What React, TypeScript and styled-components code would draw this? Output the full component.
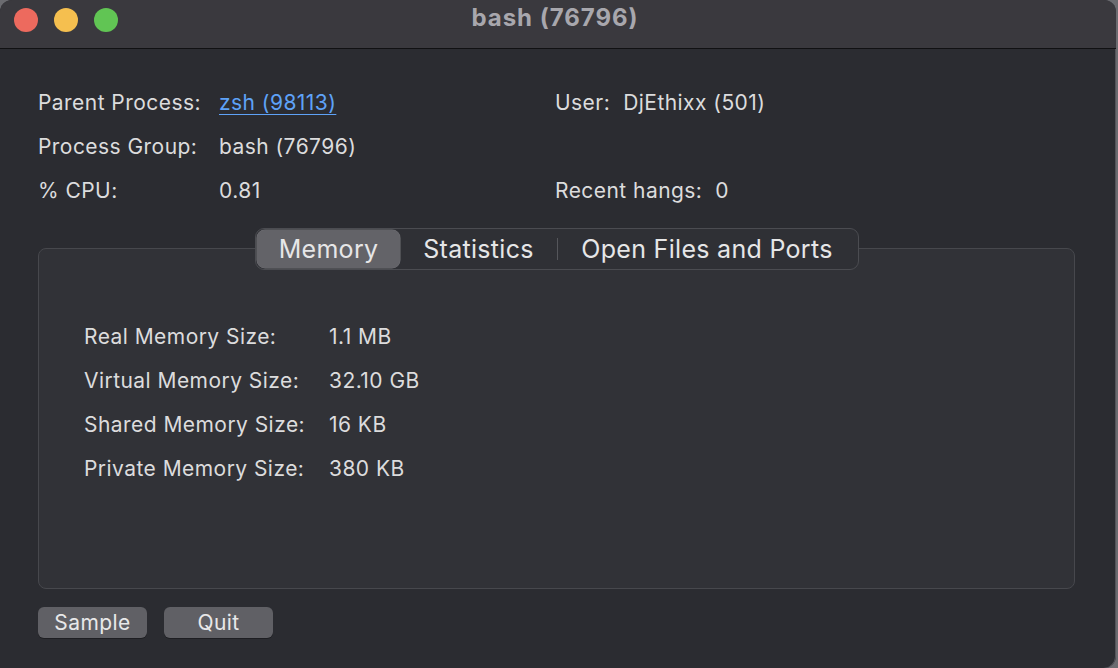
import React from "react";
import styled, { createGlobalStyle } from "styled-components";

const Global = createGlobalStyle`
  html, body { margin: 0; padding: 0; background: #2b2c30; }
  body { font-family: Inter, "Noto Sans", "Liberation Sans", sans-serif; -webkit-font-smoothing: antialiased; }
  #root { width: 1118px; height: 668px; overflow: hidden; background: #6b6b70; }
`;

const Window = styled.div`
  width: 1116px;
  height: 668px;
  background: #2b2c31;
  border-top-right-radius: 12px;
  border-bottom-right-radius: 12px;
  border-top-left-radius: 12px;
  box-shadow: inset -1px 0 0 #55555a;
  display: flex;
  flex-direction: column;
  overflow: hidden;
`;

const TitleBar = styled.div`
  height: 48px;
  flex: none;
  background: #3a393e;
  border-bottom: 1px solid #111113;
  display: flex;
  align-items: center;
  position: relative;
  padding-left: 14px;
  gap: 16px;
`;

const Light = styled.span<{ $c: string }>`
  width: 24px;
  height: 24px;
  border-radius: 50%;
  background: ${(p) => p.$c};
  margin-top: -8px;
`;

const Title = styled.div`
  position: absolute;
  left: 0;
  right: 0;
  top: 3px;
  text-align: center;
  font-weight: 700;
  font-size: 24px;
  color: #a8a7ad;
  letter-spacing: 0.95px;
  transform: translateX(-3px);
`;

const Body = styled.div`
  flex: 1;
  padding: 31px 40px 0 38px;
  display: flex;
  flex-direction: column;
`;

const Text = `
  font-size: 21px;
  letter-spacing: 0.45px;
  color: #dcdcdd;
`;

const InfoGrid = styled.div`
  display: grid;
  grid-template-columns: 181px 336px 1fr;
  grid-auto-rows: 44px;
  align-items: center;
  ${Text}
`;

const Label = styled.span``;

const Value = styled.span``;

const Link = styled.a`
  color: #5ea2f7;
  text-decoration: underline;
  text-underline-offset: 4px;
  text-decoration-thickness: 1px;
`;

const RightCell = styled.span`
  display: flex;
  gap: 13px;
`;

const GroupWrap = styled.div`
  position: relative;
  margin-top: 36px;
  width: 1037px;
`;

const Group = styled.div`
  height: 341px;
  background: #313237;
  border: 1px solid #47484d;
  border-radius: 8px;
  box-sizing: border-box;
  padding: 65px 45px 0;
`;

const Tabs = styled.div`
  position: absolute;
  top: -20px;
  left: 217px;
  height: 42px;
  box-sizing: border-box;
  width: 604px;
  background: #2f3035;
  border: 1px solid #4b4c51;
  border-radius: 9px;
  display: flex;
  align-items: center;
  padding: 1px;
  font-size: 25px;
  letter-spacing: 0.3px;
  color: #e6e6e7;
`;

const Tab = styled.div<{ $active?: boolean; $w: number }>`
  width: ${(p) => p.$w}px;
  height: 38px;
  display: flex;
  align-items: center;
  justify-content: center;
  border-radius: 8px;
  background: ${(p) => (p.$active ? "#636368" : "transparent")};
  box-shadow: ${(p) => (p.$active ? "0 0 0 0.5px #707075" : "none")};
`;

const Divider = styled.span`
  width: 1px;
  height: 22px;
  background: #55565b;
`;

const MemGrid = styled.div`
  display: grid;
  grid-template-columns: 245px 1fr;
  grid-auto-rows: 44px;
  align-items: center;
  ${Text}
`;

const Buttons = styled.div`
  display: flex;
  gap: 17px;
  margin-top: 18px;
`;

const Button = styled.button`
  width: 109px;
  height: 31px;
  border: none;
  border-radius: 6px;
  background: #606065;
  color: #e8e8e9;
  font-family: inherit;
  font-size: 21px;
  letter-spacing: 0.45px;
  padding: 0;
  display: flex;
  align-items: center;
  justify-content: center;
  box-shadow: 0 1px 0 rgba(0, 0, 0, 0.3);
`;

export default function App() {
  return (
    <>
      <Global />
      <Window>
        <TitleBar>
          <Light $c="#ed6a5e" />
          <Light $c="#f5bf4f" />
          <Light $c="#61c554" />
          <Title>bash (76796)</Title>
        </TitleBar>
        <Body>
          <InfoGrid>
            <Label>Parent Process:</Label>
            <Value>
              <Link>zsh (98113)</Link>
            </Value>
            <RightCell>
              <span>User:</span>
              <span>DjEthixx (501)</span>
            </RightCell>
            <Label>Process Group:</Label>
            <Value>bash (76796)</Value>
            <span />
            <Label>% CPU:</Label>
            <Value>0.81</Value>
            <RightCell>
              <span>Recent hangs:</span>
              <span>0</span>
            </RightCell>
          </InfoGrid>
          <GroupWrap>
            <Group>
              <MemGrid>
                <Label>Real Memory Size:</Label>
                <Value>1.1 MB</Value>
                <Label>Virtual Memory Size:</Label>
                <Value>32.10 GB</Value>
                <Label>Shared Memory Size:</Label>
                <Value>16 KB</Value>
                <Label>Private Memory Size:</Label>
                <Value>380 KB</Value>
              </MemGrid>
            </Group>
            <Tabs>
              <Tab $active $w={143}>Memory</Tab>
              <Tab $w={157}>Statistics</Tab>
              <Divider />
              <Tab $w={298}>Open Files and Ports</Tab>
            </Tabs>
          </GroupWrap>
          <Buttons>
            <Button>Sample</Button>
            <Button>Quit</Button>
          </Buttons>
        </Body>
      </Window>
    </>
  );
}
